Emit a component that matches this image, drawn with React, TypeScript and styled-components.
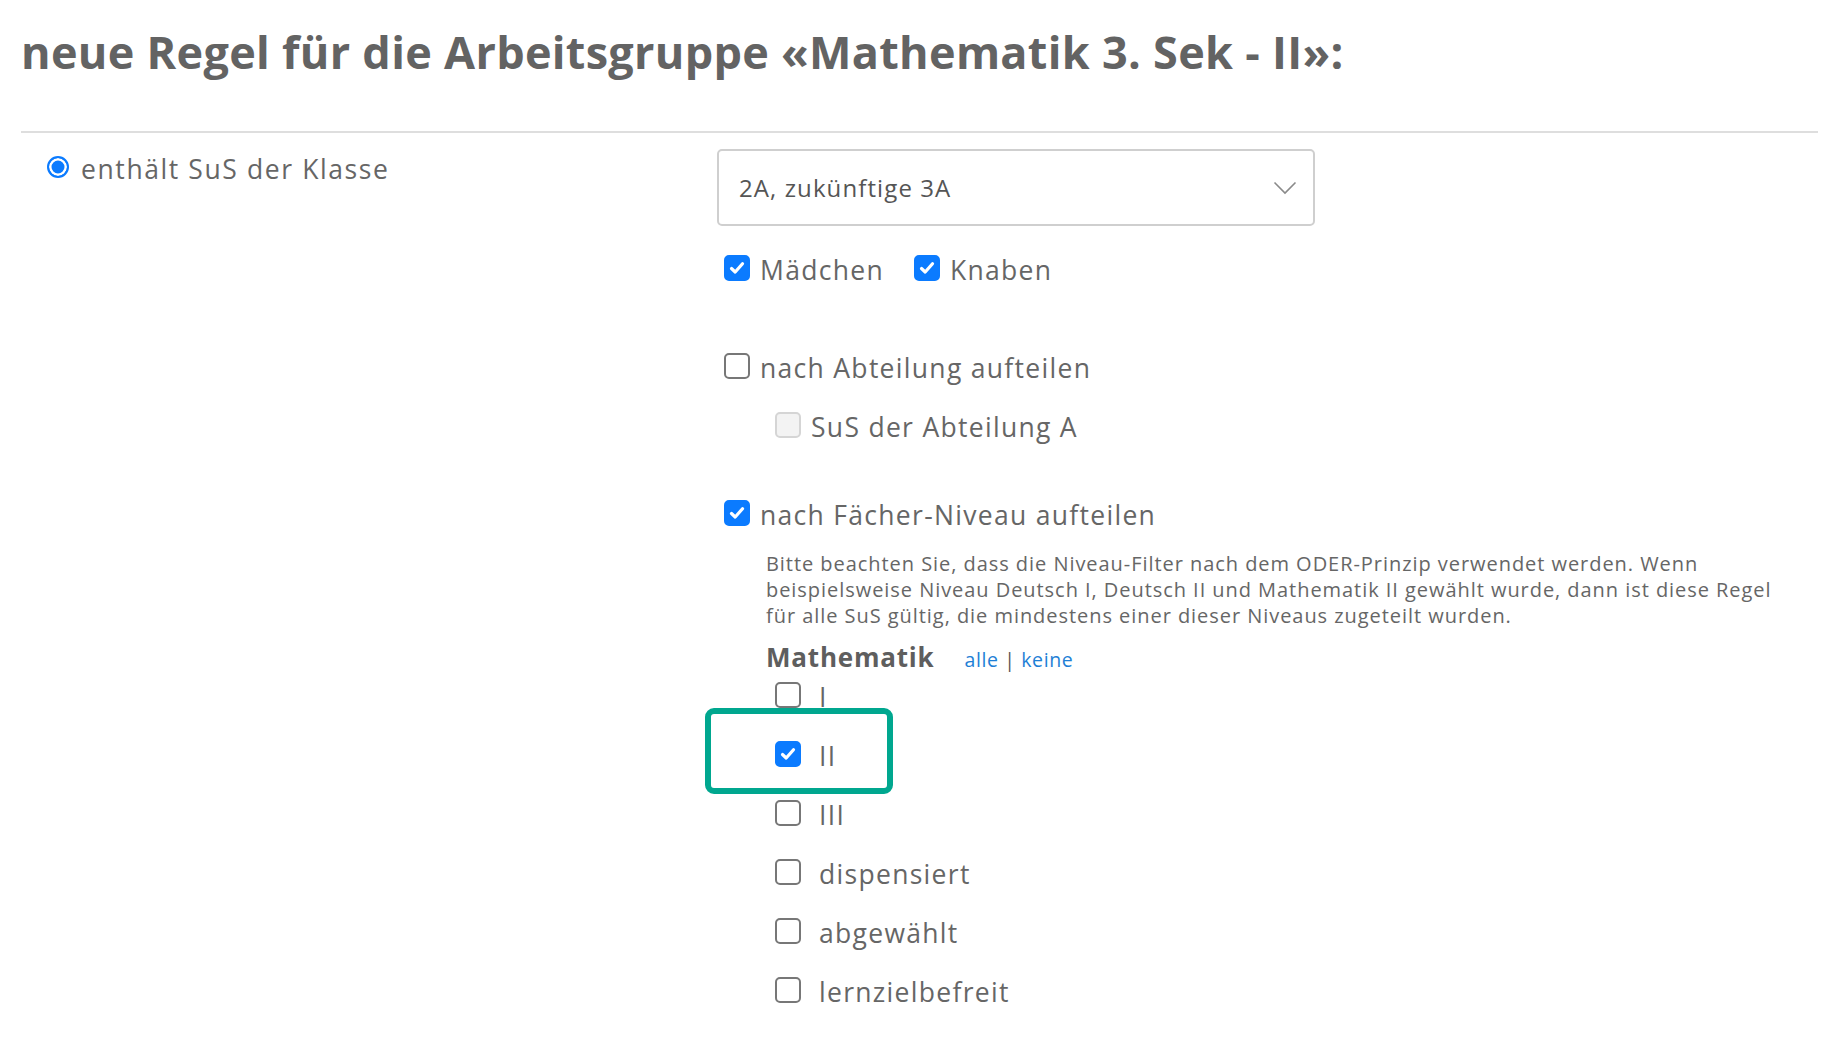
import React from "react";
import styled, { createGlobalStyle, css } from "styled-components";

const Global = createGlobalStyle`
  html, body { margin: 0; padding: 0; background: #fff; }
  body { font-family: "Open Sans", "Lato", "Noto Sans", sans-serif; color: #666; }
`;

const Page = styled.div`
  padding: 0 12px 0 21px;
`;

const Title = styled.h1`
  margin: 0;
  padding-top: 26px;
  line-height: 52px;
  font-size: 45px;
  font-weight: 700;
  color: #636363;
  letter-spacing: 0.3px;
`;

const Rule = styled.hr`
  margin: 53px 0 0 0;
  border: 0;
  height: 2px;
  background: #dedede;
`;

const FormRow = styled.div`
  display: grid;
  grid-template-columns: 696px 1fr;
  padding-top: 16px;
`;

const LeftCol = styled.div`
  padding-left: 26px;
`;

const RadioRow = styled.label`
  display: flex;
  align-items: center;
  gap: 12px;
  height: 40px;
  font-size: 26.5px;
  letter-spacing: 1.6px;
  color: #666;
`;

const Radio = styled.span`
  box-sizing: border-box;
  width: 22px;
  height: 22px;
  border-radius: 50%;
  border: 2.5px solid #0b7bff;
  background: #0b7bff;
  box-shadow: inset 0 0 0 2.5px #fff;
  flex: none;
  margin-top: -4px;
`;

const RightCol = styled.div`
  display: flex;
  flex-direction: column;
  align-items: flex-start;
`;

const Select = styled.div`
  box-sizing: border-box;
  width: 598px;
  height: 77px;
  border: 2px solid #cfcfcf;
  border-radius: 5px;
  display: flex;
  align-items: center;
  justify-content: space-between;
  padding: 0 16px 0 20px;
  font-size: 24px;
  letter-spacing: 1.1px;
  color: #555;
`;

const Row = styled.div<{ $mt?: number; $indent?: number; $gap?: number }>`
  position: relative;
  display: flex;
  align-items: center;
  height: 40px;
  margin-top: ${(p) => p.$mt ?? 0}px;
  padding-left: ${(p) => p.$indent ?? 7}px;
  gap: ${(p) => p.$gap ?? 30}px;
`;

const CheckLabel = styled.label<{ $gap?: number }>`
  display: flex;
  align-items: center;
  gap: ${(p) => p.$gap ?? 10}px;
  font-size: 26.5px;
  letter-spacing: 1.3px;
  color: #666;
  line-height: 1;
`;

const Box = styled.span<{ $checked?: boolean; $disabled?: boolean }>`
  box-sizing: border-box;
  width: 26px;
  height: 26px;
  border-radius: 5px;
  flex: none;
  display: flex;
  align-items: center;
  justify-content: center;
  margin-top: -5px;
  border: 2px solid #777;
  background: #fff;
  ${(p) =>
    p.$checked &&
    css`
      border-color: #0b7bff;
      background: #0b7bff;
    `}
  ${(p) =>
    p.$disabled &&
    css`
      border-color: #d5d5d5;
      background: #f3f3f3;
    `}
`;

const Note = styled.p`
  margin: 15.5px 0 0 49px;
  font-size: 20px;
  letter-spacing: 0.95px;
  line-height: 26px;
  color: #666;
  white-space: nowrap;
`;

const SubjectHead = styled.div`
  display: flex;
  align-items: baseline;
  gap: 30px;
  height: 30px;
  margin: 10px 0 0 49px;
`;

const SubjectName = styled.span`
  font-size: 26px;
  font-weight: 700;
  letter-spacing: 0.8px;
  color: #5e5e5e;
`;

const Links = styled.span`
  font-size: 19.5px;
  letter-spacing: 0.6px;
  color: #555;
  a {
    color: #1e7fd6;
    text-decoration: none;
  }
`;

const Options = styled.div`
  display: flex;
  flex-direction: column;
  gap: 19px;
  margin-top: 8px;
  padding-left: 58px;
`;

const Highlight = styled.span`
  position: absolute;
  top: -28px;
  left: -70px;
  width: 188px;
  height: 86px;
  box-sizing: border-box;
  border: 6px solid #00a78f;
  border-radius: 9px;
  pointer-events: none;
`;

const Check = ({ checked, disabled }: { checked?: boolean; disabled?: boolean }) => (
  <Box $checked={checked} $disabled={disabled}>
    {checked && (
      <svg width="18" height="18" viewBox="0 0 18 18">
        <path d="M3.5 9.5 L7.2 13 L14.5 4.8" fill="none" stroke="#fff" strokeWidth="3.2" strokeLinecap="round" strokeLinejoin="round" />
      </svg>
    )}
  </Box>
);

const Chevron = () => (
  <svg width="24" height="14" viewBox="0 0 24 14">
    <polyline points="1.5,1.5 12,12 22.5,1.5" fill="none" stroke="#8a8a8a" strokeWidth="1.6" />
  </svg>
);

const levels = ["I", "II", "III", "dispensiert", "abgewählt", "lernzielbefreit"];

export default function App() {
  return (
    <Page>
      <Global />
      <Title>neue Regel für die Arbeitsgruppe «Mathematik 3. Sek - II»:</Title>
      <Rule />
      <FormRow>
        <LeftCol>
          <RadioRow>
            <Radio />
            enthält SuS der Klasse
          </RadioRow>
        </LeftCol>
        <RightCol>
          <Select>
            <span>2A, zukünftige 3A</span>
            <Chevron />
          </Select>
          <Row $mt={24.5}>
            <CheckLabel>
              <Check checked />
              Mädchen
            </CheckLabel>
            <CheckLabel>
              <Check checked />
              Knaben
            </CheckLabel>
          </Row>
          <Row $mt={58}>
            <CheckLabel>
              <Check />
              nach Abteilung aufteilen
            </CheckLabel>
          </Row>
          <Row $mt={19} $indent={58}>
            <CheckLabel>
              <Check disabled />
              SuS der Abteilung A
            </CheckLabel>
          </Row>
          <Row $mt={48}>
            <CheckLabel>
              <Check checked />
              nach Fächer-Niveau aufteilen
            </CheckLabel>
          </Row>
          <Note>
            Bitte beachten Sie, dass die Niveau-Filter nach dem ODER-Prinzip verwendet werden. Wenn
            <br />
            beispielsweise Niveau Deutsch I, Deutsch II und Mathematik II gewählt wurde, dann ist diese Regel
            <br />
            für alle SuS gültig, die mindestens einer dieser Niveaus zugeteilt wurden.
          </Note>
          <SubjectHead>
            <SubjectName>Mathematik</SubjectName>
            <Links>
              <a href="#">alle</a> | <a href="#">keine</a>
            </Links>
          </SubjectHead>
          <Options>
            {levels.map((l) => (
              <Row key={l} $indent={0}>
                <CheckLabel $gap={18}>
                  <Check checked={l === "II"} />
                  {l}
                </CheckLabel>
                {l === "II" && <Highlight />}
              </Row>
            ))}
          </Options>
        </RightCol>
      </FormRow>
    </Page>
  );
}
